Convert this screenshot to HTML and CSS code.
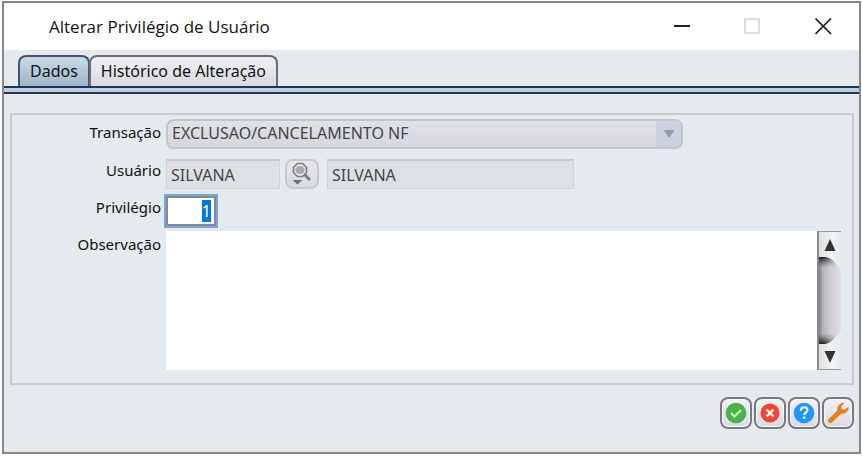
FILE: index.html
```html
<!DOCTYPE html>
<html lang="pt-BR">
<head>
  <meta charset="UTF-8" />
  <meta name="viewport" content="width=device-width, initial-scale=1.0"/>
  <title>Alterar Privilégio de Usuário</title>
  <link rel="stylesheet" href="styles.css">
</head>
<body>

  <div class="window">
    <header class="titlebar">
      <h1>Alterar Privilégio de Usuário</h1>
      <div class="window-controls">
        <button type="button" aria-label="Minimizar">
          <svg width="18" height="18" viewBox="0 0 18 18"><path d="M1 8h16" stroke="#222" stroke-width="2"/></svg>
        </button>
        <button type="button" aria-label="Maximizar" disabled>
          <svg width="18" height="18" viewBox="0 0 18 18"><rect x="1" y="1" width="14" height="14" fill="none" stroke="#ccc" stroke-width="1.3"/></svg>
        </button>
        <button type="button" aria-label="Fechar">
          <svg width="18" height="18" viewBox="0 0 18 18"><path d="M0.500 0.500l15.500 15.500M16 0.500L0.500 16" stroke="#222" stroke-width="1.700"/></svg>
        </button>
      </div>
    </header>

    <nav class="tabs">
      <button type="button" class="tab active">Dados</button>
      <button type="button" class="tab">Histórico de Alteração</button>
    </nav>
    <div class="tab-strip"></div>

    <form class="content">
      <div class="panel">
        <div class="row">
          <label for="transacao">Transação</label>
          <div class="combo">
            <select id="transacao" disabled>
              <option>EXCLUSAO/CANCELAMENTO NF</option>
            </select>
            <span class="combo-arrow">
              <svg width="12" height="8" viewBox="0 0 12 8"><path d="M0.500 0h11L6 8z" fill="#9599a3"/></svg>
            </span>
          </div>
        </div>

        <div class="row">
          <label for="usuario">Usuário</label>
          <div class="user-fields">
            <input type="text" id="usuario" class="readonly code" value="SILVANA" readonly />
            <button type="button" class="search" aria-label="Pesquisar usuário">
              <svg width="22" height="24" viewBox="0 0 22 24">
                <path d="M13 12l6 6" stroke="#7c7c7c" stroke-width="3"/>
                <path d="M6.500 1.500h5l4 4v5l-4 4h-5l-4-4v-5z" fill="#e9ebee" stroke="#7c7c7c" stroke-width="1.700"/>
                <path d="M7 4h4l2.500 2.500v3L11 12H7L4.500 9.500v-3z" fill="#a9abad"/>
                <path d="M1.500 18h10l-5 4.500z" fill="#707070"/>
              </svg>
            </button>
            <input type="text" class="readonly name" value="SILVANA" aria-label="Nome do usuário" readonly />
          </div>
        </div>

        <div class="row">
          <label for="privilegio">Privilégio</label>
          <input type="text" id="privilegio" class="privilege" value="1" />
        </div>

        <div class="row">
          <label for="observacao">Observação</label>
          <div class="notes">
            <textarea id="observacao"></textarea>
            <div class="scrollbar">
              <span class="arrow">
                <svg width="12" height="12" viewBox="0 0 12 12"><path d="M6 0l5.500 12H0.500z" fill="#333"/></svg>
              </span>
              <span class="thumb">
                <svg viewBox="0 0 23 87" preserveAspectRatio="none">
                  <defs>
                    <linearGradient id="thumb" x1="0" x2="1" y1="0" y2="0">
                      <stop offset="0" stop-color="#85858b"/>
                      <stop offset="0.200" stop-color="#b7b7bd"/>
                      <stop offset="0.500" stop-color="#cdcdd3"/>
                      <stop offset="1" stop-color="#dddde2"/>
                    </linearGradient>
                    <linearGradient id="edge" x1="0" x2="0" y1="0" y2="1">
                      <stop offset="0" stop-color="#222" stop-opacity="1"/>
                      <stop offset="0.120" stop-color="#444" stop-opacity="0"/>
                      <stop offset="0.880" stop-color="#444" stop-opacity="0"/>
                      <stop offset="1" stop-color="#222" stop-opacity="1"/>
                    </linearGradient>
                    <linearGradient id="fade" x1="0" x2="1" y1="0" y2="0">
                      <stop offset="0.200" stop-color="#fff"/>
                      <stop offset="0.900" stop-color="#000"/>
                    </linearGradient>
                    <mask id="edge-mask"><rect width="23" height="87" fill="url(#fade)"/></mask>
                  </defs>
                  <path d="M0 0h6q8 1 12 7l5 7v59l-5 6q-5 7-12 8H0z" fill="url(#thumb)"/>
                  <path d="M0 0h6q8 1 12 7l5 7v59l-5 6q-5 7-12 8H0z" fill="url(#edge)" mask="url(#edge-mask)"/>
                </svg>
              </span>
              <span class="arrow">
                <svg width="12" height="12" viewBox="0 0 12 12"><path d="M0.500 0h11L6 12z" fill="#333"/></svg>
              </span>
            </div>
          </div>
        </div>
      </div>

      <div class="actions">
        <button type="button" aria-label="Confirmar">
          <svg width="22" height="22" viewBox="0 0 22 22">
            <circle cx="11" cy="11" r="10.300" fill="#4caf50"/>
            <path d="M6 11l3.500 3.500L16 8" fill="none" stroke="#ccff90" stroke-width="2.200"/>
          </svg>
        </button>
        <button type="button" aria-label="Cancelar">
          <svg width="22" height="22" viewBox="0 0 22 22">
            <circle cx="11" cy="11" r="9.500" fill="#f44336"/>
            <path d="M7.500 7.500l7 7M14.500 7.500l-7 7" stroke="#fff" stroke-width="2.400"/>
          </svg>
        </button>
        <button type="button" aria-label="Ajuda">
          <svg width="22" height="22" viewBox="0 0 22 22">
            <circle cx="11" cy="11" r="10.300" fill="#2196f3"/>
            <path d="M7.700 8.700c0-4.500 6.800-4.500 6.800-.7 0 2.500-3.200 2.500-3.200 5" fill="none" stroke="#fff" stroke-width="2"/>
            <circle cx="11.300" cy="15.700" r="1.300" fill="#fff"/>
          </svg>
        </button>
        <button type="button" aria-label="Configurar">
          <svg width="22" height="22" viewBox="0 0 22 22">
            <path d="M3.500 18.500L13 9.500" stroke="#e67e22" stroke-width="5" stroke-linecap="round"/>
            <path d="M17.500 0.800a6.300 6.300 0 0 0-6.500 9.200 6.300 6.300 0 0 0 10.500-5.500l-4 3.300-2.600-.6-.6-2.500z" fill="#e67e22"/>
          </svg>
        </button>
      </div>
    </form>
  </div>

  <script>
    document.getElementById('privilegio').select();
  </script>
</body>
</html>
```

FILE: styles.css
```css
* {
  box-sizing: border-box;
  margin: 0;
  padding: 0;
}

body {
  font-family: 'Noto Sans', sans-serif;
  font-size: 16px;
  background: #fff;
  color: #111;
  padding: 1px 1px 4px 2px;
  min-height: 100vh;
  display: flex;
}

button,
input,
select,
textarea {
  font: inherit;
  color: inherit;
}

svg {
  display: block;
}

.window {
  flex: 1;
  display: flex;
  flex-direction: column;
  background: #e5eaee;
  border: 2px solid #85888a;
}

.titlebar {
  display: flex;
  justify-content: space-between;
  align-items: center;
  height: 47px;
  padding-left: 45px;
  background: #fff;
}

.titlebar h1 {
  font-family: 'Open Sans', sans-serif;
  font-size: 17px;
  font-weight: 400;
}

.window-controls {
  display: flex;
}

.window-controls button {
  width: 71px;
  height: 44px;
  display: flex;
  align-items: center;
  justify-content: center;
  background: none;
  border: none;
}

.tabs {
  display: flex;
  padding: 5px 14px 0;
}

.tab {
  height: 31px;
  padding: 0 10px 2px;
  border: 2px solid #6a6d74;
  border-bottom: none;
  border-radius: 8px 8px 0 0;
  background: linear-gradient(#f0f0f3, #d8d9e0);
}

.tab + .tab {
  margin-left: -1px;
}

.tab.active {
  border-color: #42546b;
  background: linear-gradient(#cbd9e5, #9eb5ca);
}

.tab-strip {
  height: 8px;
  border: solid #29334a;
  border-width: 2px 0;
  background: #b9d0e8;
}

.content {
  flex: 1;
  padding: 19px 5px 0 6px;
}

.panel {
  display: flex;
  flex-direction: column;
  padding: 4px 11px 13px 4px;
  border: 2px solid #c9cccf;
}

.row {
  display: grid;
  grid-template-columns: 145px 1fr;
  column-gap: 5px;
  align-items: start;
}

.row label {
  font-size: 15px;
  line-height: 26px;
  text-align: right;
}

.combo {
  display: flex;
  width: 517px;
  max-width: 100%;
  height: 30px;
  margin-bottom: 8px;
  border: 2px solid #c0c4cd;
  border-radius: 8px;
  background: linear-gradient(#e1e2e7, #d5d7df);
  overflow: hidden;
}

.combo select {
  flex: 1;
  appearance: none;
  padding: 0 0 2px 4px;
  border: none;
  background: none;
  color: #444;
  opacity: 1;
}

.combo-arrow {
  width: 25px;
  display: flex;
  align-items: center;
  justify-content: center;
  background: #cbd1dd;
}

.user-fields {
  display: flex;
  height: 30px;
  margin: 2px 0 5px;
}

.readonly {
  padding-left: 4px;
  border: 1px solid #ced1d5;
  border-top: 2px solid #c6c9cd;
  background: #dde0e4;
  color: #444;
}

.readonly.code {
  width: 114px;
}

.readonly.name {
  width: 247px;
}

.search {
  width: 34px;
  margin: 0 8px 0 5px;
  display: flex;
  align-items: center;
  justify-content: center;
  border: 2px solid #c6cad0;
  border-radius: 8px;
  background: linear-gradient(#e6e7eb, #d8dae1);
}

.privilege {
  width: 50px;
  height: 30px;
  margin: 2px 0 5px;
  padding-right: 3px;
  border: 2px solid #858990;
  outline: 2px solid #79a6d2;
  background: #fff;
  text-align: right;
}

.privilege::selection {
  background: #0078d7;
  color: #fff;
}

.notes {
  display: flex;
  height: 139px;
}

.notes textarea {
  flex: 1;
  padding: 4px;
  border: none;
  resize: none;
  background: #fff;
}

.scrollbar {
  width: 24px;
  display: flex;
  flex-direction: column;
  border: 1px solid #999;
  border-left: 2px solid #888;
  border-right: none;
  background: linear-gradient(90deg, #dde0e2, #f1f3f4 60%, #e5eaee);
}

.scrollbar .arrow {
  height: 25px;
  display: flex;
  align-items: center;
  justify-content: center;
}

.scrollbar .thumb {
  flex: 1;
}

.scrollbar .thumb svg {
  width: 100%;
  height: 100%;
}

.actions {
  display: flex;
  justify-content: flex-end;
  gap: 2px;
  padding-top: 12px;
}

.actions button {
  width: 32px;
  height: 32px;
  display: flex;
  align-items: center;
  justify-content: center;
  border: 2px solid #777a80;
  border-radius: 8px;
  background: linear-gradient(#f2f2f5, #d9dae0);
  box-shadow: inset 0 0 0 1px #f5f5f7;
}
```
